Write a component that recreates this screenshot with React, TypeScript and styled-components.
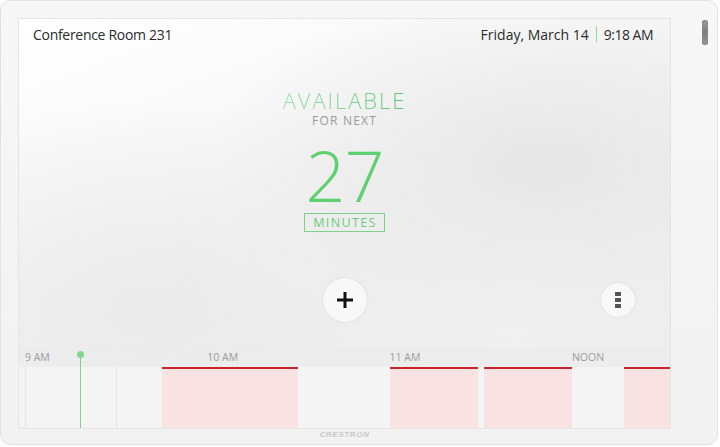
import React from 'react';
import styled, { createGlobalStyle } from 'styled-components';

const GlobalStyle = createGlobalStyle`
  html, body {
    margin: 0;
    padding: 0;
    background: #ffffff;
    font-family: 'Open Sans', 'Liberation Sans', sans-serif;
  }
`;

const HOUR_PX = 182.3;
const ORIGIN_PX = 6;
const START_HOUR = 9;

const toX = (h: number, m: number) => ORIGIN_PX + (h - START_HOUR + m / 60) * HOUR_PX;

const hours = [
  { label: '9 AM', h: 9 },
  { label: '10 AM', h: 10 },
  { label: '11 AM', h: 11 },
  { label: 'NOON', h: 12 },
];

const meetings = [
  { from: [9, 45], to: [10, 30] },
  { from: [11, 0], to: [11, 29] },
  { from: [11, 31], to: [12, 0] },
  { from: [12, 17], to: [13, 0] },
];

const gridLines = [
  [9, 0],
  [9, 30],
  [10, 0],
];

const Device = styled.div`
  box-sizing: border-box;
  width: 718px;
  height: 445px;
  padding: 17px 0 0 17px;
  display: flex;
  flex-direction: column;
  background: linear-gradient(180deg, #f7f7f7 0%, #f2f2f2 100%);
  border: 1px solid #e2e2e2;
  border-radius: 10px;
`;

const Row = styled.div`
  display: flex;
`;

const Screen = styled.div`
  box-sizing: border-box;
  width: 653px;
  height: 411px;
  display: flex;
  flex-direction: column;
  border: 1px solid #e4e4e4;
  background:
    radial-gradient(ellipse at 80% 35%, rgba(225, 225, 225, 0.7) 0%, rgba(235, 235, 235, 0) 45%),
    radial-gradient(ellipse at 20% 70%, rgba(228, 228, 228, 0.6) 0%, rgba(235, 235, 235, 0) 50%),
    linear-gradient(160deg, #ffffff 0%, #f4f4f4 45%, #ececec 100%);
  overflow: hidden;
`;

const SideBezel = styled.div`
  flex: 1;
  display: flex;
  justify-content: flex-end;
  padding: 2px 9px 0 0;
`;

const Pill = styled.div`
  width: 6px;
  height: 25px;
  border-radius: 3px;
  background: linear-gradient(180deg, #9a9a9a 0%, #7c7c7c 50%, #9a9a9a 100%);
  box-shadow: inset 0 0 0 1px #8a8a8a;
`;

const BottomBezel = styled.div`
  width: 653px;
  display: flex;
  justify-content: center;
  padding-top: 1px;
`;

const Logo = styled.span`
  font-family: 'Liberation Sans', Arial, sans-serif;
  font-size: 8px;
  font-weight: 700;
  font-style: italic;
  letter-spacing: 0.6px;
  color: #c8c8c8;
`;

const Header = styled.div`
  height: 30px;
  display: flex;
  align-items: center;
  justify-content: space-between;
  padding: 0 17px 0 14px;
  color: #2b2b2b;
  font-size: 14px;
`;

const RoomName = styled.span`
  letter-spacing: -0.3px;
`;

const DateTime = styled.div`
  display: flex;
  align-items: center;
  gap: 7px;
`;

const Time = styled.span`
  letter-spacing: -0.5px;
`;

const Divider = styled.span`
  width: 1px;
  height: 16px;
  background: #8fd89a;
`;

const Main = styled.div`
  flex: 1;
  display: flex;
  flex-direction: column;
  align-items: center;
`;

const Status = styled.div`
  margin-top: 38px;
  font-size: 22px;
  line-height: 26px;
  font-weight: 300;
  letter-spacing: 1.9px;
  background: linear-gradient(90deg, #9ee0aa 0%, #7ad088 60%, #5cc56e 100%);
  -webkit-background-clip: text;
  background-clip: text;
  color: transparent;
`;

const Sub = styled.div`
  font-size: 12px;
  line-height: 16px;
  letter-spacing: 1.2px;
  color: #9a9a9a;
`;

const Count = styled.div`
  margin-top: 11px;
  font-size: 70px;
  line-height: 70px;
  font-weight: 300;
  color: #5fd06f;
  letter-spacing: -1px;
`;

const Unit = styled.div`
  box-sizing: border-box;
  margin-top: 3px;
  height: 19px;
  padding: 0 7px 0 8px;
  border: 1px solid #7fd08c;
  font-size: 12.5px;
  line-height: 17px;
  letter-spacing: 1.4px;
  color: #6dcb7c;
`;

const Actions = styled.div`
  margin-top: auto;
  margin-bottom: 26px;
  width: 100%;
  height: 44px;
  display: grid;
  grid-template-columns: 1fr 44px 1fr;
  align-items: center;
`;

const RoundButton = styled.button<{ $size: number }>`
  width: ${(p) => p.$size}px;
  height: ${(p) => p.$size}px;
  padding: 0;
  border: none;
  border-radius: 50%;
  background: #f8f8f8;
  box-shadow: 0 0 2px rgba(0, 0, 0, 0.12);
  display: flex;
  align-items: center;
  justify-content: center;
  cursor: pointer;
`;

const MenuSlot = styled.div`
  justify-self: end;
  margin-right: 35px;
`;

const Timeline = styled.div`
  position: relative;
  height: 80px;
  display: flex;
  flex-direction: column;
`;

const LabelRow = styled.div`
  height: 19px;
  background: linear-gradient(180deg, rgba(234, 234, 234, 0.5) 0%, #ededed 100%);
`;

const Track = styled.div`
  flex: 1;
  background: #f4f4f4;
`;

const HourLabel = styled.span`
  position: absolute;
  top: 3px;
  font-size: 10.5px;
  line-height: 13px;
  color: #9c9c9c;
`;

const GridLine = styled.div`
  position: absolute;
  top: 19px;
  bottom: 0;
  width: 1px;
  background: #e4e4e4;
`;

const Booking = styled.div`
  position: absolute;
  top: 19px;
  bottom: 0;
  background: #f8e2e2;
  border-top: 2px solid #c8262a;
  box-sizing: border-box;
`;

const NowLine = styled.div`
  position: absolute;
  top: 7px;
  bottom: 0;
  width: 1px;
  background: #7fd38c;

  &::before {
    content: '';
    position: absolute;
    top: -4px;
    left: -3px;
    width: 7px;
    height: 7px;
    border-radius: 50%;
    background: #7fd88c;
  }
`;

const PlusIcon = () => (
  <svg width="18" height="18" viewBox="0 0 18 18">
    <rect x="7.5" y="1" width="3" height="16" fill="#111" />
    <rect x="1" y="7.5" width="16" height="3" fill="#111" />
  </svg>
);

const DotsIcon = () => (
  <svg width="6" height="16" viewBox="0 0 6 16">
    <rect x="0" y="0" width="6" height="4" fill="#555" />
    <rect x="0" y="6" width="6" height="4" fill="#555" />
    <rect x="0" y="12" width="6" height="4" fill="#555" />
  </svg>
);

const App = () => {
  const end = 652;
  return (
    <>
      <GlobalStyle />
      <Device>
        <Row>
          <Screen>
            <Header>
              <RoomName>Conference Room 231</RoomName>
              <DateTime>
                <span>Friday, March 14</span>
                <Divider />
                <Time>9:18 AM</Time>
              </DateTime>
            </Header>
            <Main>
              <Status>AVAILABLE</Status>
              <Sub>FOR NEXT</Sub>
              <Count>27</Count>
              <Unit>MINUTES</Unit>
              <Actions>
                <span />
                <RoundButton $size={44} aria-label="Reserve">
                  <PlusIcon />
                </RoundButton>
                <MenuSlot>
                  <RoundButton $size={34} aria-label="More">
                    <DotsIcon />
                  </RoundButton>
                </MenuSlot>
              </Actions>
            </Main>
            <Timeline>
              <LabelRow />
              <Track />
              {gridLines.map(([h, m]) => (
                <GridLine key={`${h}${m}`} style={{ left: toX(h, m) }} />
              ))}
              {meetings.map((mt, i) => {
                const left = toX(mt.from[0], mt.from[1]);
                const right = Math.min(toX(mt.to[0], mt.to[1]), end);
                return <Booking key={i} style={{ left, width: right - left }} />;
              })}
              {hours.map((hr) => (
                <HourLabel key={hr.label} style={{ left: toX(hr.h, 0) }}>
                  {hr.label}
                </HourLabel>
              ))}
              <NowLine style={{ left: toX(9, 18) }} />
            </Timeline>
          </Screen>
          <SideBezel>
            <Pill />
          </SideBezel>
        </Row>
        <BottomBezel>
          <Logo>CRESTRON</Logo>
        </BottomBezel>
      </Device>
    </>
  );
};

export default App;
